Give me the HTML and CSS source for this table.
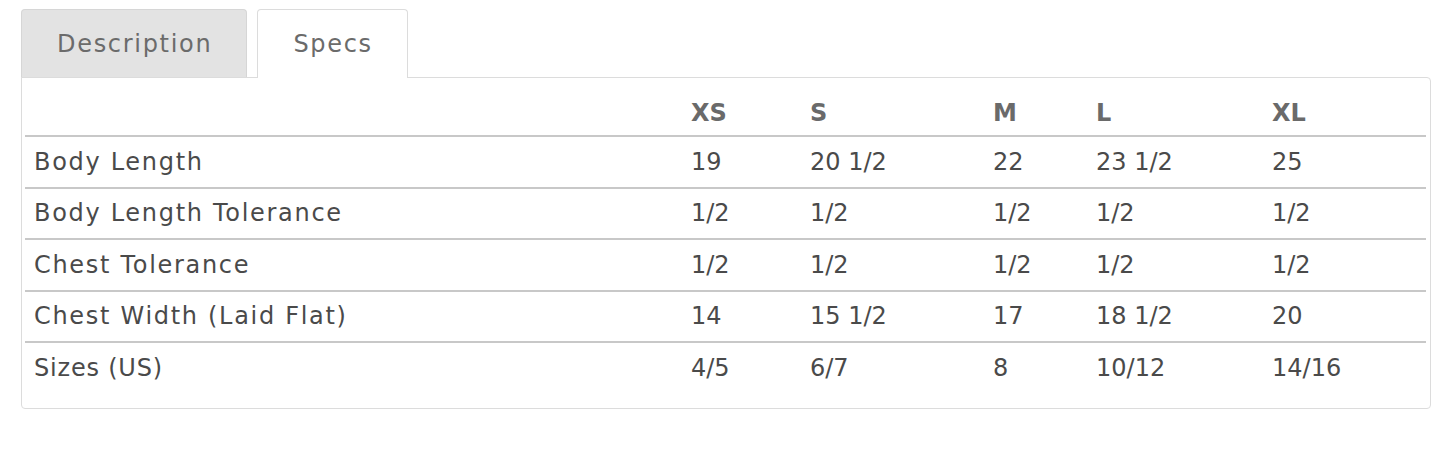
FILE: index.html
```html
<!DOCTYPE html>
<html lang="en">
<head>
<meta charset="utf-8">
<title>Specs</title>
<link rel="stylesheet" href="styles.css">
</head>
<body>
<div class="tabs">
  <div class="tab-list">
    <div class="tab">Description</div>
    <div class="tab active">Specs</div>
  </div>
  <div class="panel">
    <table class="specs">
      <colgroup>
        <col class="c-label">
        <col class="c-xs">
        <col class="c-s">
        <col class="c-m">
        <col class="c-l">
        <col class="c-xl">
      </colgroup>
      <thead>
        <tr><th></th><th>XS</th><th>S</th><th>M</th><th>L</th><th>XL</th></tr>
      </thead>
      <tbody>
        <tr><td class="label">Body Length</td><td>19</td><td>20 1/2</td><td>22</td><td>23 1/2</td><td>25</td></tr>
        <tr><td class="label">Body Length Tolerance</td><td>1/2</td><td>1/2</td><td>1/2</td><td>1/2</td><td>1/2</td></tr>
        <tr><td class="label">Chest Tolerance</td><td>1/2</td><td>1/2</td><td>1/2</td><td>1/2</td><td>1/2</td></tr>
        <tr><td class="label">Chest Width (Laid Flat)</td><td>14</td><td>15 1/2</td><td>17</td><td>18 1/2</td><td>20</td></tr>
        <tr><td class="label label-tight">Sizes (US)</td><td>4/5</td><td>6/7</td><td>8</td><td>10/12</td><td>14/16</td></tr>
      </tbody>
    </table>
  </div>
</div>
</body>
</html>
```
FILE: styles.css
```css
html, body {
  margin: 0;
  padding: 0;
  background: #fff;
}
body {
  font-family: "DejaVu Sans", "Open Sans", sans-serif;
  color: #4a4a4a;
}
.tabs {
  padding: 9px 14px 0 21px;
}
.tab-list {
  display: flex;
  gap: 10px;
  align-items: flex-end;
}
.tab {
  box-sizing: border-box;
  height: 69px;
  padding: 0 34px 0 35px;
  display: flex;
  align-items: center;
  font-size: 24px;
  letter-spacing: 1.7px;
  color: #6b6b6b;
  background: #e3e3e3;
  border: 1px solid #d6d6d6;
  border-bottom: none;
  border-radius: 4px 4px 0 0;
  margin-bottom: -1px;
  position: relative;
  z-index: 0;
}
.tab.active {
  background: #fff;
  border-color: #dcdcdc;
  z-index: 2;
}
.panel {
  box-sizing: border-box;
  width: 1410px;
  border: 1px solid #dcdcdc;
  border-radius: 0 4px 4px 4px;
  padding: 0 4px 15px 3px;
  position: relative;
  z-index: 1;
  background: #fff;
}
.specs {
  width: 100%;
  border-collapse: collapse;
  table-layout: fixed;
  font-size: 24px;
}
.c-label { width: 657px; }
.c-xs { width: 119px; }
.c-s { width: 183px; }
.c-m { width: 103px; }
.c-l { width: 176px; }
.c-xl { width: 163px; }
.specs th {
  height: 49px;
  vertical-align: bottom;
  text-align: left;
  font-weight: bold;
  color: #6a6a6a;
  padding: 0 9px 8px;
  border-bottom: 2px solid #c8c8c8;
}
.specs td {
  height: 49.5px;
  padding: 0 9px;
  vertical-align: middle;
  border-bottom: 2px solid #c8c8c8;
  white-space: nowrap;
}
.specs td.label {
  letter-spacing: 1.7px;
}
.specs td.label-tight {
  letter-spacing: 0.8px;
}
.specs tbody tr:last-child td {
  border-bottom: none;
}
```
